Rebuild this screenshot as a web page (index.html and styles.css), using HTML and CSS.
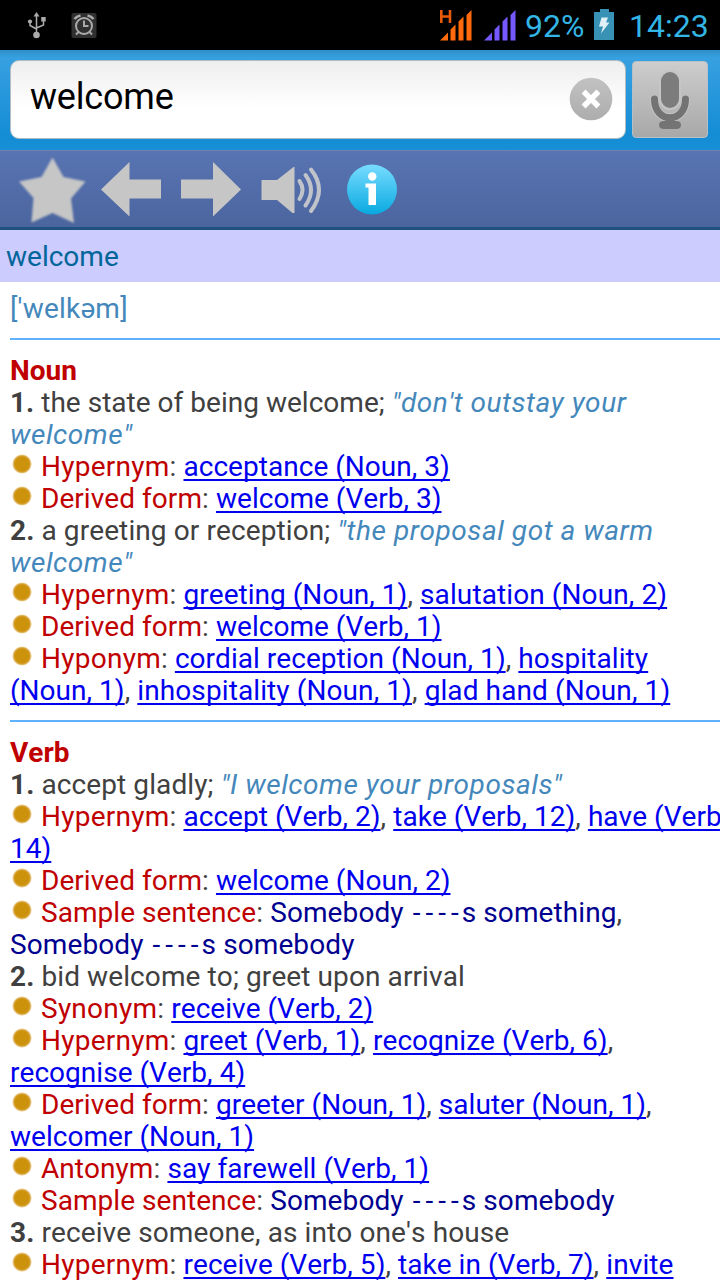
FILE: index.html
```html
<!DOCTYPE html>
<html lang="en">
<head>
<meta charset="utf-8">
<title>welcome</title>
<link rel="stylesheet" href="styles.css">
</head>
<body>
<header class="status">
  <svg class="status-left" width="110" height="50" viewBox="0 0 110 50">
    <g fill="none" stroke="#aaa" stroke-width="1.5"><path d="M36.5 15v20M30 22v3.5l6.500 3.500M43.500 20v5l-7 3"/></g>
    <g fill="#aaa"><path d="M36.500 12l3 4.500h-6z"/><circle cx="36.500" cy="35" r="3.300"/><circle cx="30" cy="21.500" r="2.100"/><path d="M41.200 17h4.500v4.500h-4.500z"/></g>
    <rect x="71.500" y="13" width="25" height="25" rx="2" fill="#303030"/>
    <g fill="none" stroke="#aaa"><circle cx="84" cy="26" r="8" stroke-width="2"/><path stroke-width="2" d="M84 20.500V26h4.500M78.500 32l-2.500 2.500M89.500 32l2.500 2.500"/><path stroke-width="2.600" d="M74.500 19q2-2.800 6-3.500M93.500 19q-2-2.800-6-3.500"/></g>
  </svg>
  <div class="status-right">
    <svg width="80" height="50" viewBox="437 0 80 50">
      <path fill="#ff6a0c" d="M440 40.500h8v-8zM450.500 29.500l5-5v16h-5zM458.500 21.500l5-5v24h-5zM466.500 15l5-5v30.500h-5z"/>
      <path fill="none" stroke="#e8590a" stroke-width="2.600" d="M441.300 10v13M450 10v13M441.300 16.500h8.700"/>
      <path fill="#7558ff" d="M484 40.500h8v-8zM494.500 29.500l5-5v16h-5zM502.500 21.500l5-5v24h-5zM510.500 15l5-5v30.500h-5z"/>
    </svg>
    <span class="percent">92%</span>
    <svg class="battery" width="20" height="50" viewBox="0 0 20 50"><path fill="#3892b6" d="M6 9h9v3h5v28H0V12h6z"/><path fill="#dff1f7" d="M7.500 17.500h6.500l-2 5h3.500L7 33.500l2-7H5z"/></svg>
    <span class="clock">14:23</span>
  </div>
</header>
<div class="search">
  <div class="field"><span class="query">welcome</span>
    <svg width="44" height="44" viewBox="0 0 44 44"><defs><linearGradient id="clear" x2="0" y2="1"><stop stop-color="#c2c2c2"/><stop offset="1" stop-color="#adadad"/></linearGradient></defs><circle cx="22" cy="22" r="21.300" fill="url(#clear)"/><path d="M16.500 16.500l11 11m0-11l-11 11" stroke="#fff" stroke-width="5.500" stroke-linecap="square"/></svg>
  </div>
  <div class="mic">
    <svg width="76" height="76" viewBox="0 0 76 76"><g fill="none" stroke="#737373"><path d="M21.500 37c0 25 31 25 31 0" stroke="#c2c2c2" stroke-width="9" stroke-linecap="round"/><path d="M21.500 37c0 25 31 25 31 0" stroke-width="7" stroke-linecap="round"/></g><rect x="27" y="9" width="20" height="38" rx="10" fill="#7c7c7c" stroke="#c5c5c5" stroke-width="2"/><path d="M33 55h8v4h3q4 .5 4 4t-4 4H30q-4-.5-4-4t4-4h3z" fill="#747474"/></svg>
  </div>
</div>
<nav class="toolbar">
  <svg width="420" height="76" viewBox="0 152 420 76">
    <defs><linearGradient id="info" x2="0" y2="1"><stop stop-color="#78dcff"/><stop offset="1" stop-color="#08a9e0"/></linearGradient></defs>
    <path class="star" d="M52.500 157.500l11 19.500 22 4.500-14.500 17 3 24.500L52.500 213l-21 9.500 2-24.500-14.500-16.500 22.500-4.500z" fill="#c6c6c6"/>
    <path fill="#c6c6c6" d="M101 189.500L129.500 162v17.500H161v19h-31.500v18zM241 189.500L213 162v17.500h-32v19h32v18z"/>
    <path fill="#c6c6c6" d="M261.500 180H277l16.500-13h1v46h-2L277 200h-15.500z"/>
    <path fill="none" stroke="#c0c3ca" stroke-width="4" stroke-linecap="round" d="M299.500 181q6 8.500 0 18M305.500 175q11 15 0 30.500M311 169.500q16 20 0 41.500"/>
    <circle cx="372" cy="189.500" r="25" fill="url(#info)"/>
    <g fill="#fff"><circle cx="372.300" cy="176.500" r="4.200"/><path d="M365.500 183.500h10.500v21.500h-7.500v-17.500h-3z"/></g>
  </svg>
</nav>
<h1 class="headword">welcome</h1>
<main class="entry">
<div class="phonetic">['welkəm]</div>
<hr>
<section class="pos">
<h2>Noun</h2>
<p class="tight"><b>1.</b> the state of being welcome; <i>"don't outstay your</i></p>
<p><i>welcome"</i></p>
<p><span class="dot"></span><em class="wide">Hypernym</em>: <a>acceptance (Noun, 3)</a></p>
<p><span class="dot"></span><em>Derived form</em>: <a>welcome (Verb, 3)</a></p>
<p><b>2.</b> a greeting or reception; <i>"the proposal got a warm</i></p>
<p><i>welcome"</i></p>
<p><span class="dot"></span><em class="wide">Hypernym</em>: <a>greeting (Noun, 1)</a>, <a class="loose">salutation (Noun, 2)</a></p>
<p><span class="dot"></span><em>Derived form</em>: <a>welcome (Verb, 1)</a></p>
<p><span class="dot"></span><em class="wide">Hyponym</em>: <a>cordial reception (Noun, 1)</a>, <a class="loose">hospitality</a></p>
<p><a>(Noun, 1)</a>, <a class="loose">inhospitality (Noun, 1)</a>, <a class="loose">glad hand (Noun, 1)</a></p>
</section>
<hr>
<section class="pos">
<h2>Verb</h2>
<p><b>1.</b> accept gladly; <i>"I welcome your proposals"</i></p>
<p><span class="dot"></span><em class="wide">Hypernym</em>: <a>accept (Verb, 2)</a>, <a>take (Verb, 12)</a>, <a>have (Verb</a></p>
<p><a>14)</a></p>
<p><span class="dot"></span><em>Derived form</em>: <a>welcome (Noun, 2)</a></p>
<p><span class="dot"></span><em>Sample sentence</em>: <q>Somebody <span class="dashes">----</span>s something</q>,</p>
<p><q>Somebody <span class="dashes">----</span>s somebody</q></p>
<p><b>2.</b> bid welcome to; greet upon arrival</p>
<p><span class="dot"></span><em class="wide">Synonym</em>: <a>receive (Verb, 2)</a></p>
<p><span class="dot"></span><em class="wide">Hypernym</em>: <a>greet (Verb, 1)</a>, <a>recognize (Verb, 6)</a>,</p>
<p><a>recognise (Verb, 4)</a></p>
<p><span class="dot"></span><em>Derived form</em>: <a>greeter (Noun, 1)</a>, <a>saluter (Noun, 1)</a>,</p>
<p><a>welcomer (Noun, 1)</a></p>
<p><span class="dot"></span><em>Antonym</em>: <a>say farewell (Verb, 1)</a></p>
<p><span class="dot"></span><em>Sample sentence</em>: <q>Somebody <span class="dashes">----</span>s somebody</q></p>
<p><b>3.</b> receive someone, as into one's house</p>
<p><span class="dot"></span><em class="wide">Hypernym</em>: <a>receive (Verb, 5)</a>, <a>take in (Verb, 7)</a>, <a class="loose">invite</a></p>
</section>
</main>
</body>
</html>
```
FILE: styles.css
```css
* { box-sizing: border-box; }
body { margin: 0; width: 720px; height: 1280px; overflow: hidden; background: #fff; font-family: Roboto, "Noto Sans", sans-serif; font-kerning: none; }
svg { display: block; flex: none; }
h1, h2, p { margin: 0; }
.status { height: 50px; background: #000; display: flex; justify-content: space-between; color: #33b5e5; font-size: 32px; line-height: 52px; }
.status-right { display: flex; width: 283px; }
.percent { width: 70px; margin-left: 8px; white-space: nowrap; }
.battery { margin: 0 15px 0 -1px; }
.search { height: 100px; padding: 10px 11px 11px 10px; display: flex; gap: 6px; background: linear-gradient(#2f8fc9, #37a0e1 8px, #148dd5 85px, #168fd6); }
.field { width: 616px; height: 79px; padding: 16px 12px 18px 19px; display: flex; justify-content: space-between; border: 1px solid #aebdc6; border-radius: 9px; background: linear-gradient(#eee, #fff 60%); }
.query { font-size: 36px; line-height: 40px; letter-spacing: -0.2px; color: #000; }
.mic { width: 76px; height: 77px; margin-top: 1px; border: 1px solid #b6c0c6; border-radius: 4px; background: linear-gradient(#cdcdcd, #a8a8a8); }
.toolbar { height: 80px; padding-top: 1px; border-top: 1px solid #7782b3; border-bottom: 3px solid #20527f; background: linear-gradient(#5874b2, #4b659f); }
.star { filter: blur(1px); }
.headword { height: 52px; padding-left: 6px; background: #ccf; color: #069; font-size: 28px; line-height: 53px; font-weight: 400; }
.entry { padding-left: 10px; color: #404040; font-size: 28px; line-height: 32px; white-space: nowrap; }
.phonetic { height: 56px; padding-top: 11px; color: #48b; letter-spacing: 0.2px; }
hr { height: 2px; margin: 0; border: 0; background: #5fb2fb; }
.pos { height: 380px; padding-top: 15px; }
.pos h2 { font-size: 28px; line-height: 32px; color: #c00000; }
.pos p { height: 32px; letter-spacing: 0.1px; }
.pos .tight { letter-spacing: 0.02px; }
.pos i { color: #48b; letter-spacing: 0.55px; }
.pos em { color: #c00000; font-style: normal; letter-spacing: 0.05px; }
.pos .wide { letter-spacing: 0.25px; }
.pos a { color: #00e; letter-spacing: 0.03px; text-decoration: underline 2px; text-underline-offset: 3px; text-decoration-skip-ink: none; }
.pos .loose { letter-spacing: 0.1px; }
.pos q { color: #000090; quotes: none; }
.dashes { margin: 0 -2px 0 2px; letter-spacing: 5px; }
.dot { display: inline-block; width: 20px; height: 20px; margin: 0 9px 0 2px; vertical-align: 2px; border-radius: 50%; background: radial-gradient(circle closest-side, #cc920b 68%, #d9a53c 82%, #fff0 100%); }
```
